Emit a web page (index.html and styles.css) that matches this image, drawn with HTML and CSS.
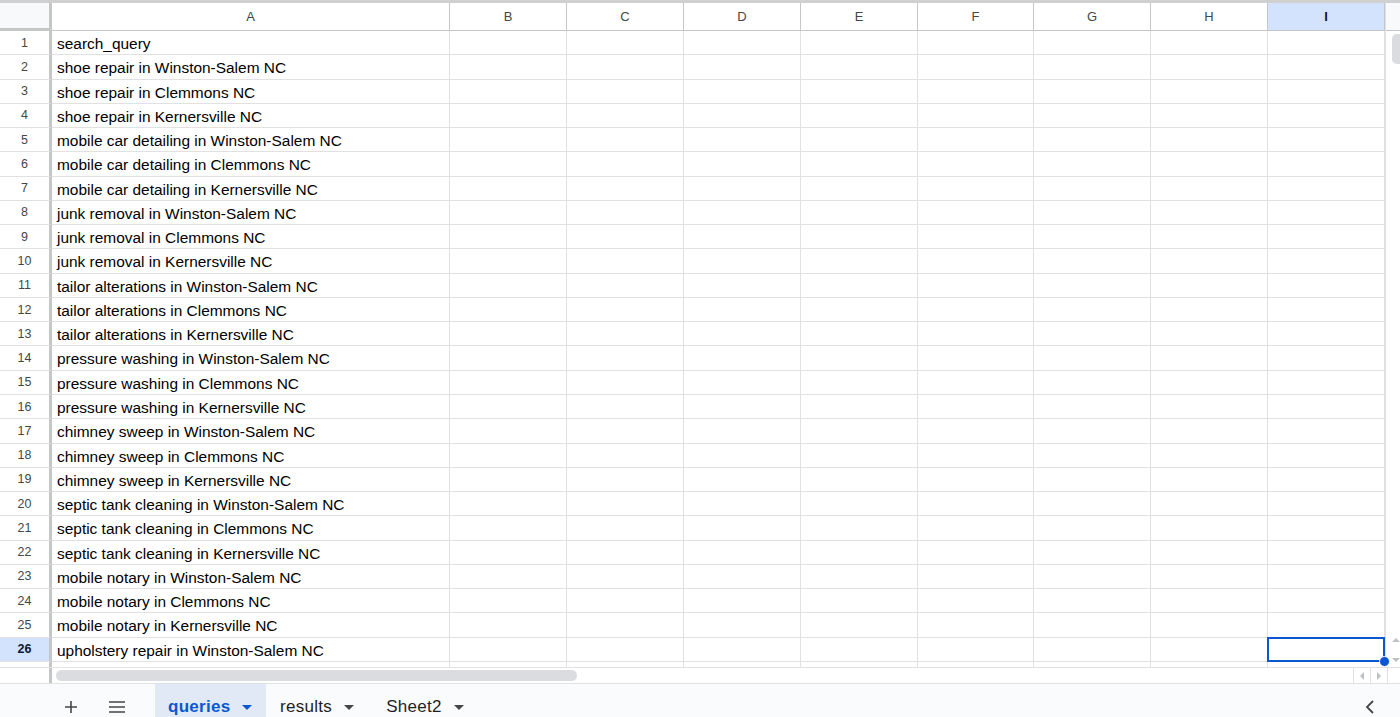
FILE: index.html
```html
<!DOCTYPE html>
<html>
<head>
<meta charset="utf-8">
<link rel="stylesheet" href="styles.css">
</head>
<body>
<div class="app">
  <div class="main">
    <div class="grid">
      <div class="corner"></div>
      <div class="ch">A</div><div class="ch">B</div><div class="ch">C</div><div class="ch">D</div><div class="ch">E</div><div class="ch">F</div><div class="ch">G</div><div class="ch">H</div><div class="ch sel">I</div>

      <div class="rh">1</div><div class="c">search_query</div><div class="c"></div><div class="c"></div><div class="c"></div><div class="c"></div><div class="c"></div><div class="c"></div><div class="c"></div><div class="c"></div>
      <div class="rh">2</div><div class="c">shoe repair in Winston-Salem NC</div><div class="c"></div><div class="c"></div><div class="c"></div><div class="c"></div><div class="c"></div><div class="c"></div><div class="c"></div><div class="c"></div>
      <div class="rh">3</div><div class="c">shoe repair in Clemmons NC</div><div class="c"></div><div class="c"></div><div class="c"></div><div class="c"></div><div class="c"></div><div class="c"></div><div class="c"></div><div class="c"></div>
      <div class="rh">4</div><div class="c">shoe repair in Kernersville NC</div><div class="c"></div><div class="c"></div><div class="c"></div><div class="c"></div><div class="c"></div><div class="c"></div><div class="c"></div><div class="c"></div>
      <div class="rh">5</div><div class="c">mobile car detailing in Winston-Salem NC</div><div class="c"></div><div class="c"></div><div class="c"></div><div class="c"></div><div class="c"></div><div class="c"></div><div class="c"></div><div class="c"></div>
      <div class="rh">6</div><div class="c">mobile car detailing in Clemmons NC</div><div class="c"></div><div class="c"></div><div class="c"></div><div class="c"></div><div class="c"></div><div class="c"></div><div class="c"></div><div class="c"></div>
      <div class="rh">7</div><div class="c">mobile car detailing in Kernersville NC</div><div class="c"></div><div class="c"></div><div class="c"></div><div class="c"></div><div class="c"></div><div class="c"></div><div class="c"></div><div class="c"></div>
      <div class="rh">8</div><div class="c">junk removal in Winston-Salem NC</div><div class="c"></div><div class="c"></div><div class="c"></div><div class="c"></div><div class="c"></div><div class="c"></div><div class="c"></div><div class="c"></div>
      <div class="rh">9</div><div class="c">junk removal in Clemmons NC</div><div class="c"></div><div class="c"></div><div class="c"></div><div class="c"></div><div class="c"></div><div class="c"></div><div class="c"></div><div class="c"></div>
      <div class="rh">10</div><div class="c">junk removal in Kernersville NC</div><div class="c"></div><div class="c"></div><div class="c"></div><div class="c"></div><div class="c"></div><div class="c"></div><div class="c"></div><div class="c"></div>
      <div class="rh">11</div><div class="c">tailor alterations in Winston-Salem NC</div><div class="c"></div><div class="c"></div><div class="c"></div><div class="c"></div><div class="c"></div><div class="c"></div><div class="c"></div><div class="c"></div>
      <div class="rh">12</div><div class="c">tailor alterations in Clemmons NC</div><div class="c"></div><div class="c"></div><div class="c"></div><div class="c"></div><div class="c"></div><div class="c"></div><div class="c"></div><div class="c"></div>
      <div class="rh">13</div><div class="c">tailor alterations in Kernersville NC</div><div class="c"></div><div class="c"></div><div class="c"></div><div class="c"></div><div class="c"></div><div class="c"></div><div class="c"></div><div class="c"></div>
      <div class="rh">14</div><div class="c">pressure washing in Winston-Salem NC</div><div class="c"></div><div class="c"></div><div class="c"></div><div class="c"></div><div class="c"></div><div class="c"></div><div class="c"></div><div class="c"></div>
      <div class="rh">15</div><div class="c">pressure washing in Clemmons NC</div><div class="c"></div><div class="c"></div><div class="c"></div><div class="c"></div><div class="c"></div><div class="c"></div><div class="c"></div><div class="c"></div>
      <div class="rh">16</div><div class="c">pressure washing in Kernersville NC</div><div class="c"></div><div class="c"></div><div class="c"></div><div class="c"></div><div class="c"></div><div class="c"></div><div class="c"></div><div class="c"></div>
      <div class="rh">17</div><div class="c">chimney sweep in Winston-Salem NC</div><div class="c"></div><div class="c"></div><div class="c"></div><div class="c"></div><div class="c"></div><div class="c"></div><div class="c"></div><div class="c"></div>
      <div class="rh">18</div><div class="c">chimney sweep in Clemmons NC</div><div class="c"></div><div class="c"></div><div class="c"></div><div class="c"></div><div class="c"></div><div class="c"></div><div class="c"></div><div class="c"></div>
      <div class="rh">19</div><div class="c">chimney sweep in Kernersville NC</div><div class="c"></div><div class="c"></div><div class="c"></div><div class="c"></div><div class="c"></div><div class="c"></div><div class="c"></div><div class="c"></div>
      <div class="rh">20</div><div class="c">septic tank cleaning in Winston-Salem NC</div><div class="c"></div><div class="c"></div><div class="c"></div><div class="c"></div><div class="c"></div><div class="c"></div><div class="c"></div><div class="c"></div>
      <div class="rh">21</div><div class="c">septic tank cleaning in Clemmons NC</div><div class="c"></div><div class="c"></div><div class="c"></div><div class="c"></div><div class="c"></div><div class="c"></div><div class="c"></div><div class="c"></div>
      <div class="rh">22</div><div class="c">septic tank cleaning in Kernersville NC</div><div class="c"></div><div class="c"></div><div class="c"></div><div class="c"></div><div class="c"></div><div class="c"></div><div class="c"></div><div class="c"></div>
      <div class="rh">23</div><div class="c">mobile notary in Winston-Salem NC</div><div class="c"></div><div class="c"></div><div class="c"></div><div class="c"></div><div class="c"></div><div class="c"></div><div class="c"></div><div class="c"></div>
      <div class="rh">24</div><div class="c">mobile notary in Clemmons NC</div><div class="c"></div><div class="c"></div><div class="c"></div><div class="c"></div><div class="c"></div><div class="c"></div><div class="c"></div><div class="c"></div>
      <div class="rh">25</div><div class="c">mobile notary in Kernersville NC</div><div class="c"></div><div class="c"></div><div class="c"></div><div class="c"></div><div class="c"></div><div class="c"></div><div class="c"></div><div class="c"></div>
      <div class="rh sel">26</div><div class="c">upholstery repair in Winston-Salem NC</div><div class="c"></div><div class="c"></div><div class="c"></div><div class="c"></div><div class="c"></div><div class="c"></div><div class="c"></div><div class="c active"><span class="handle"></span></div>
      <div class="rh">27</div><div class="c">upholstery repair in Clemmons NC</div><div class="c"></div><div class="c"></div><div class="c"></div><div class="c"></div><div class="c"></div><div class="c"></div><div class="c"></div><div class="c"></div>
    </div>
    <div class="vscroll">
      <div class="vs-head"></div>
      <div class="vs-track">
        <div class="vs-thumb"></div>
        <div class="vs-arrows">
          <svg width="10" height="8" viewBox="0 0 10 8"><path d="M1 6 L5 2 L9 6 Z" fill="#bdc1c6"/></svg>
          <svg width="10" height="8" viewBox="0 0 10 8"><path d="M1 2 L5 6 L9 2 Z" fill="#bdc1c6"/></svg>
        </div>
      </div>
    </div>
  </div>
  <div class="hscroll">
    <div class="hs-left"></div>
    <div class="hs-track"><div class="hs-thumb"></div></div>
    <div class="hs-btn"><svg width="8" height="10" viewBox="0 0 8 10"><path d="M6 1 L2 5 L6 9 Z" fill="#bdc1c6"/></svg></div>
    <div class="hs-btn"><svg width="8" height="10" viewBox="0 0 8 10"><path d="M2 1 L6 5 L2 9 Z" fill="#bdc1c6"/></svg></div>
    <div class="hs-corner"></div>
  </div>
  <div class="tabs">
    <div class="tb-icon plus"><svg width="16" height="16" viewBox="0 0 16 16"><path d="M8 2 V14 M2 8 H14" stroke="#444746" stroke-width="1.6"/></svg></div>
    <div class="tb-icon menu"><svg width="18" height="14" viewBox="0 0 18 14"><path d="M1 2 H17 M1 7 H17 M1 12 H17" stroke="#444746" stroke-width="1.6"/></svg></div>
    <div class="tab active">queries<span class="caret"></span></div>
    <div class="tab">results<span class="caret"></span></div>
    <div class="tab">Sheet2<span class="caret"></span></div>
    <div class="spacer"></div>
    <div class="tb-icon back"><svg width="12" height="16" viewBox="0 0 12 16"><path d="M9 2 L3 8 L9 14" stroke="#444746" stroke-width="1.8" fill="none"/></svg></div>
  </div>
</div>
</body>
</html>
```
FILE: styles.css
```css
html, body {
  margin: 0;
  padding: 0;
  background: #fff;
}
body {
  font-family: "Liberation Sans", Arial, sans-serif;
  color: #000;
  overflow: hidden;
}
.app {
  width: 1400px;
  height: 717px;
  display: flex;
  flex-direction: column;
}
.main {
  display: flex;
  height: 668px;
  overflow: hidden;
  border-top: 3px solid #d0d0d0;
  box-sizing: border-box;
}
.grid {
  display: grid;
  grid-template-columns: 52px 398px 117px 117px 117px 117px 116px 117px 117px 117px;
  grid-template-rows: 28px;
  grid-auto-rows: 24.28px;
  width: 1385px;
  flex: none;
  align-content: start;
}
.corner {
  background: #f8f9fa;
  border-right: 3px solid #c4c7c5;
  border-bottom: 3px solid #c4c7c5;
  box-sizing: border-box;
}
.ch {
  display: flex;
  align-items: center;
  justify-content: center;
  font-size: 13px;
  color: #444746;
  border-right: 1px solid #c4c7c5;
  border-bottom: 1px solid #c4c7c5;
  box-sizing: border-box;
  background: #fff;
}
.ch.sel {
  background: #d3e3fd;
  color: #0b1a36;
  font-weight: bold;
}
.rh {
  display: flex;
  align-items: center;
  justify-content: center;
  font-size: 12.5px;
  color: #444746;
  border-right: 3px solid #c4c7c5;
  border-bottom: 1px solid #e1e1e1;
  box-sizing: border-box;
  background: #fff;
}
.rh.sel {
  background: #d3e3fd;
  color: #0b1a36;
  font-weight: bold;
}
.c {
  font-size: 15.45px;
  line-height: 25px;
  padding-left: 5px;
  white-space: nowrap;
  overflow: visible;
  border-right: 1px solid #e1e1e1;
  border-bottom: 1px solid #e1e1e1;
  box-sizing: border-box;
  color: #000;
}
.c.active {
  position: relative;
  border: 2px solid #0b57d0;
  margin: -1px 0 0 -1px;
}
.handle {
  position: absolute;
  right: -7px;
  bottom: -7px;
  width: 11px;
  height: 11px;
  border-radius: 50%;
  background: #0b57d0;
  border: 1px solid #fff;
  box-sizing: border-box;
}
.vscroll {
  flex: 1;
  display: flex;
  flex-direction: column;
  border-left: 1px solid #e1e1e1;
  background: #fff;
}
.vs-head {
  height: 28px;
  background: #f8f9fa;
  border-bottom: 1px solid #c4c7c5;
  box-sizing: border-box;
}
.vs-track {
  flex: 1;
  display: flex;
  flex-direction: column;
  justify-content: space-between;
  padding: 3px 0 0 6px;
}
.vs-thumb {
  width: 9px;
  height: 30px;
  background: #dadce0;
  border-radius: 5px 0 0 5px;
}
.vs-arrows {
  display: flex;
  flex-direction: column;
  gap: 12px;
  padding-bottom: 3px;
  margin-left: -1px;
}
.vs-arrows svg { display: block; }
.hscroll {
  height: 17px;
  display: flex;
  border-top: 1px solid #e1e1e1;
  border-bottom: 1px solid #e1e1e1;
  box-sizing: border-box;
  background: #fff;
}
.hs-left {
  width: 52px;
  border-right: 3px solid #c4c7c5;
  box-sizing: border-box;
}
.hs-track {
  flex: 1;
  padding: 2px 0 0 4px;
}
.hs-thumb {
  width: 521px;
  height: 11px;
  border-radius: 6px;
  background: #dadce0;
}
.hs-btn {
  width: 16px;
  display: flex;
  align-items: center;
  justify-content: center;
  border-left: 1px solid #e1e1e1;
}
.hs-corner {
  width: 12px;
  border-left: 1px solid #e1e1e1;
}
.tabs {
  flex: 1;
  display: flex;
  align-items: stretch;
  background: #f9fbfd;
}
.tb-icon {
  display: flex;
  align-items: center;
  justify-content: center;
  padding-top: 12px;
}
.tb-icon svg { display: block; }
.plus { width: 30px; margin-left: 56px; }
.menu { width: 30px; margin-left: 16px; }
.tab {
  display: flex;
  align-items: center;
  padding: 13px 14px 0 14px;
  font-size: 17px;
  color: #1f1f1f;
  letter-spacing: 0.3px;
}
.tab:nth-of-type(3) { margin-left: 23px; }
.tab:nth-of-type(4) { padding-left: 14px; }
.tab:nth-of-type(5) { padding-left: 18px; }
.tab.active {
  background: #e1e9f7;
  color: #0b57d0;
  font-weight: bold;
  padding: 13px 14px 0 13px;
  min-width: 84px;
}
.caret {
  display: inline-block;
  width: 0;
  height: 0;
  border-left: 5px solid transparent;
  border-right: 5px solid transparent;
  border-top: 5px solid #444746;
  margin-left: 12px;
  margin-top: 1px;
}
.tab.active .caret { border-top-color: #0b57d0; margin-left: 11px; }
.spacer { flex: 1; }
.back { width: 20px; margin-right: 20px; }
```
